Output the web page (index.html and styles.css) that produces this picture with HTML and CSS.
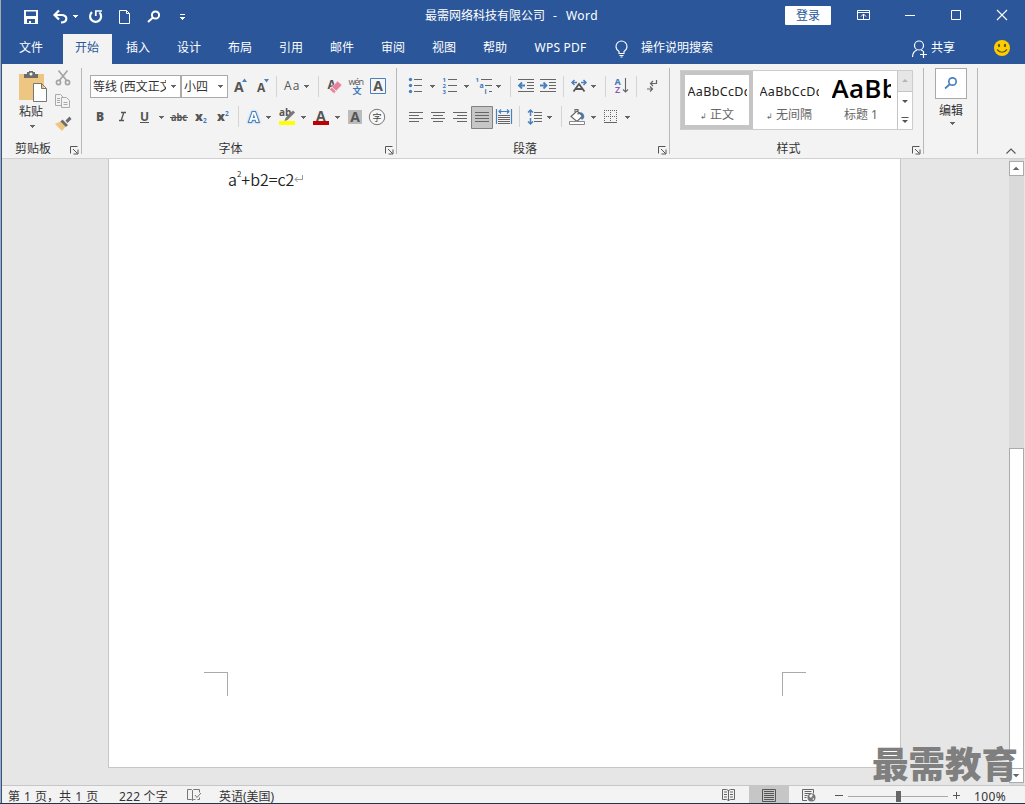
FILE: index.html
```html
<!DOCTYPE html>
<html lang="zh-CN">
<head>
<meta charset="utf-8">
<title>最需网络科技有限公司 - Word</title>
<link rel="stylesheet" href="styles.css">
</head>
<body>
<svg width="0" height="0" class="defs"><defs>
  <path id="dd" d="M0 0h5v1h-1v1h-1v1h-1v-1h-1v-1h-1z"/>
  <path id="launch" d="M.5 7.500V.5H7.500M3 3L7.500 7.500M8 3.500V8H3.500" fill="none" stroke="#555"/>
</defs></svg>
<div class="window">
  <header class="titlebar">
    <div class="quick">
      <svg width="46" height="32" viewBox="2 0 46 32"><path fill="#fff" fill-rule="evenodd" d="M24 10h14v14H24zM26 11.500v4.500h10v-4.500zM27 19v4h2v-2h2v2h4v-4z"/></svg>
      <svg width="36" height="32" viewBox="48 0 36 32"><path d="M55 15H61.500C68 15 68 22.500 61 22.500M59 10.500L54.500 15L59 19.500" fill="none" stroke="#fff" stroke-width="2.200"/><use href="#dd" x="73" y="15" fill="#fff"/></svg>
      <svg width="28" height="32" viewBox="84 0 28 32"><path d="M92 12.200A5.500 5.500 0 1 0 99.500 12.500" fill="none" stroke="#fff" stroke-width="2.200"/><path d="M95.800 16V11H102" fill="none" stroke="#fff" stroke-width="1.700"/></svg>
      <svg width="28" height="32" viewBox="112 0 28 32"><path d="M119.500 10.500H126.500L129.500 13.500V23.500H119.500zM126.500 10.500V13.500H129.500" fill="none" stroke="#fff"/></svg>
      <svg width="30" height="32" viewBox="140 0 30 32"><g fill="none" stroke="#fff" stroke-width="2"><circle cx="155.500" cy="15" r="3.600"/><path d="M153 17.500L148 22"/></g></svg>
      <svg width="30" height="32" viewBox="170 0 30 32"><path d="M180 14h5v1h-5z" fill="#fff"/><use href="#dd" x="180" y="17" fill="#fff"/></svg>
    </div>
    <div class="caption">最需网络科技有限公司<span class="dash">-</span><span class="app">Word</span></div>
    <div class="signin">登录</div>
    <div class="controls">
      <svg width="46" height="32" viewBox="840 0 46 32"><path d="M857.500 10.500h12v9h-12zM857.500 12.500h12M863.500 19V14M861 16.500l2.500-2.500l2.500 2.500" fill="none" stroke="#fff"/></svg>
      <svg width="46" height="32" viewBox="886 0 46 32"><path d="M905 15h10v1h-10z" fill="#fff"/></svg>
      <svg width="46" height="32" viewBox="932 0 46 32"><path d="M951.500 10.500h9v9h-9z" fill="none" stroke="#fff"/></svg>
      <svg width="46" height="32" viewBox="978 0 46 32"><path d="M997 10l10 10M1007 10l-10 10" fill="none" stroke="#fff" stroke-width="1.100"/></svg>
    </div>
  </header>
  <nav class="tabs">
    <span class="tab file">文件</span><span class="tab active">开始</span><span class="tab">插入</span><span class="tab">设计</span><span class="tab">布局</span><span class="tab">引用</span><span class="tab">邮件</span><span class="tab">审阅</span><span class="tab">视图</span><span class="tab">帮助</span><span class="tab wps">WPS PDF</span>
    <svg width="40" height="30" viewBox="600 34 40 30"><path d="M619 53.500V51.500C617.500 50.500 616 48.500 616 46.500A5.500 5.500 0 0 1 627 46.500C627 48.500 625.500 50.500 624 51.500V53.500zM619.500 55.500h4M620.500 57h2" fill="none" stroke="#fff" stroke-width="1.100"/></svg>
    <span class="tell">操作说明搜索</span>
    <div class="share">
      <svg width="21" height="30" viewBox="910 34 21 30"><g fill="none" stroke="#fff" stroke-width="1.200"><circle cx="919" cy="45.500" r="4.500"/><path d="M912.500 57C912.500 53 914.500 51 917 50M921 50L923 51M920 54.500H927M923.500 51V58"/></g></svg>
      <span>共享</span>
    </div>
    <svg width="20" height="30" viewBox="992 33 20 30"><circle cx="1002" cy="47" r="8" fill="#fc0"/><g fill="#5b5320"><ellipse cx="999" cy="44.500" rx="1.100" ry="1.700"/><ellipse cx="1005" cy="44.500" rx="1.100" ry="1.700"/></g><path d="M997 48.500Q1002 54 1007 48.500" fill="none" stroke="#5b5320" stroke-width="1.200"/></svg>
  </nav>
  <section class="ribbon">
    <div class="group clipboard">
      <div class="tools">
        <div class="paste">
          <svg width="50" height="36" viewBox="4 68 50 36"><path d="M19 74h25v26H19z" fill="#edc781"/><path d="M24 78v-4h3v-2h2v-1h4v1h2v2h3v4z" fill="#6d6d6d"/><circle cx="31" cy="74" r="1.500" fill="#f3f3f3"/><path d="M33.500 83.500h8l5 5v13h-13zM41.500 83.500v5h5" fill="#fff" stroke="#777"/></svg>
          <span>粘贴</span>
          <svg width="50" height="12" viewBox="7 119 50 12"><use href="#dd" x="30" y="124" fill="#666"/></svg>
        </div>
        <svg width="28" height="66" viewBox="52 68 28 66">
          <g fill="none" stroke="#a3a3a3" stroke-width="1.600"><path d="M58.500 70.500L67 81M67.500 70.500L59 81"/><circle cx="58.500" cy="82.500" r="2.100"/><circle cx="67.500" cy="82.500" r="2.100"/></g>
          <g fill="#f3f3f3" stroke="#aaa"><path d="M55.500 94.500h5l3 3v8h-8z"/><path d="M61.500 97.500h5l3 3v7h-8z"/><path d="M57 98.500h3M57 100.500h3M57 102.500h3M63.500 102.500h4M63.500 104.500h4" /></g>
          <path d="M55 124l6-3 5 5-4 5z" fill="#edc781"/><path d="M60.500 121.500l2-2 5.500 5.500-2 2zM65.500 120.500l4-4 2 2.500-4 4z" fill="#6d6d6d"/>
        </svg>
      </div>
      <div class="glabel"><span>剪贴板</span><svg width="9" height="9" viewBox="0 0 9 9"><use href="#launch"/></svg></div>
    </div>
    <div class="group font">
      <div class="tools stack">
        <div class="row top">
          <div class="combo name"><span>等线 (西文正文)</span><svg width="9" height="6" viewBox="-2 -1 9 6"><use href="#dd" fill="#666"/></svg></div>
          <div class="combo size"><span>小四</span><svg width="9" height="6" viewBox="-2 -1 9 6"><use href="#dd" fill="#666"/></svg></div>
          <svg width="24" height="28" viewBox="228 72 24 28"><text x="234" y="92" font-size="14" class="ic">A</text><path d="M242 82l2.500-3.500 2.500 3.500z" fill="#4a80bd"/></svg>
          <svg width="30" height="28" viewBox="252 72 30 28"><text x="257" y="92" font-size="12" class="ic">A</text><path d="M264 79h5l-2.500 3.500z" fill="#4a80bd"/><path d="M276 76h1v21h-1z" class="sp"/></svg>
          <svg width="38" height="28" viewBox="282 72 38 28"><text x="284" y="90" font-size="12" class="ic md" textLength="15.500">Aa</text><use href="#dd" x="304" y="85" fill="#666"/><path d="M318 76h1v21h-1z" class="sp"/></svg>
          <svg width="25" height="28" viewBox="320 72 25 28"><text x="327.500" y="89" font-size="12" class="ic">A</text><path d="M329.500 89.500l8-8.500 4.500 4-8 8.500z" fill="#e8829a" stroke="#f3f3f3" stroke-width=".6"/><path d="M331.500 87l4.500 4" stroke="#f3f3f3"/></svg>
          <svg width="23" height="28" viewBox="345 72 23 28"><text x="348.500" y="84.500" font-size="9" textLength="15.500" class="ic md">wén</text><text x="352.500" y="93.500" font-size="9" class="cjb">文</text></svg>
          <svg width="22" height="28" viewBox="368 72 22 28"><path d="M370.500 78.500h15v15h-15z" fill="#f6f6f6" stroke="#4a80bd"/><text x="373.200" y="91" font-size="14" class="ic">A</text></svg>
        </div>
        <div class="row bot">
          <svg width="24" height="26" viewBox="90 104 24 26"><text x="96" y="121" font-size="12" class="ic hv">B</text></svg>
          <svg width="22" height="26" viewBox="114 104 22 26"><path d="M121 112.500h5M119 120.500h5M123.800 112.500l-2.600 8" fill="none" stroke="#555" stroke-width="1.300"/></svg>
          <svg width="32" height="26" viewBox="136 104 32 26"><text x="140" y="121" font-size="12" class="ic">U</text><path d="M140 122h9v1h-9z" fill="#555"/><use href="#dd" x="159" y="116" fill="#666"/></svg>
          <svg width="24" height="26" viewBox="168 104 24 26"><text x="171" y="121" font-size="10.500" textLength="16" lengthAdjust="spacingAndGlyphs" class="ic">abc</text><path d="M170 117h18v1h-18z" fill="#555"/></svg>
          <svg width="20" height="26" viewBox="192 104 20 26"><text x="195" y="121" font-size="12.500" class="ic hv">x</text><text x="203" y="123" font-size="6.500" class="bl">2</text></svg>
          <svg width="32" height="26" viewBox="212 104 32 26"><text x="217" y="121" font-size="12.500" class="ic hv">x</text><text x="225" y="116" font-size="6.500" class="bl">2</text><path d="M238 106h1v21h-1z" class="sp"/></svg>
          <svg width="31" height="26" viewBox="244 104 31 26"><g font-size="14" class="ic"><text x="249" y="122" class="glow">A</text></g><use href="#dd" x="266" y="116" fill="#666"/></svg>
          <svg width="34" height="26" viewBox="275 104 34 26"><text x="279" y="116" font-size="10" class="ic">ab</text><path d="M284.500 121l1-3 7.500-7.500 2 2-7.500 7.500z" fill="#777"/><path d="M279 121h16v4h-16z" fill="#ff0"/><use href="#dd" x="301" y="116" fill="#666"/></svg>
          <svg width="36" height="26" viewBox="309 104 36 26"><text x="316" y="121" font-size="14" class="ic">A</text><path d="M313 121h16v4h-16z" fill="#c00000"/><use href="#dd" x="335" y="116" fill="#666"/></svg>
          <svg width="21" height="26" viewBox="345 104 21 26"><path d="M348 110h14v14h-14z" fill="#bbb"/><text x="350.300" y="122" font-size="14" class="ic">A</text></svg>
          <svg width="23" height="26" viewBox="366 104 23 26"><circle cx="377" cy="117" r="7.700" fill="#f8f8f8" stroke="#777"/><text x="372.500" y="120.500" font-size="9" class="cjk">字</text></svg>
        </div>
      </div>
      <div class="glabel"><span>字体</span><svg width="9" height="9" viewBox="0 0 9 9"><use href="#launch"/></svg></div>
    </div>
    <div class="group para">
      <div class="tools stack">
        <div class="row top">
          <svg width="39" height="28" viewBox="400 72 39 28"><g fill="#4a80bd"><circle cx="410.500" cy="79.500" r="1.700"/><circle cx="410.500" cy="85.500" r="1.700"/><circle cx="410.500" cy="91.500" r="1.700"/></g><path d="M414 79.500h8M414 85.500h8M414 91.500h8" class="ln"/><use href="#dd" x="430" y="85" fill="#666"/></svg>
          <svg width="34" height="28" viewBox="439 72 34 28"><g class="bl" font-size="6"><text x="442.500" y="82">1</text><text x="442.500" y="88">2</text><text x="442.500" y="94">3</text></g><path d="M448 79.500h9M448 85.500h9M448 91.500h9" class="ln"/><use href="#dd" x="464" y="85" fill="#666"/></svg>
          <svg width="39" height="28" viewBox="473 72 39 28"><g class="bl"><text x="475.500" y="82" font-size="6">1</text><text x="479.500" y="88" font-size="7">a</text><text x="484.500" y="94" font-size="7">i</text></g><path d="M481 79.500h11M485 85.500h7M489 91.500h3" class="ln"/><use href="#dd" x="496" y="85" fill="#666"/><path d="M510 76h1v21h-1z" class="sp"/></svg>
          <svg width="26" height="28" viewBox="512 72 26 28"><path d="M518 79.500h16M527 82.500h7M527 85.500h7M527 88.500h7M518 91.500h16" class="ln"/><path d="M525 85.500h-6M522 82.500l-3 3 3 3" fill="none" stroke="#4a80bd" stroke-width="1.800"/></svg>
          <svg width="28" height="28" viewBox="538 72 28 28"><path d="M540 79.500h16M549 82.500h7M549 85.500h7M549 88.500h7M540 91.500h16" class="ln"/><path d="M540 85.500h6M543.500 82.500l3 3-3 3" fill="none" stroke="#4a80bd" stroke-width="1.800"/><path d="M563 76h1v21h-1z" class="sp"/></svg>
          <svg width="41" height="28" viewBox="566 72 41 28"><path d="M573.500 91.500L579 84L584.500 91.500M575.500 89h7" fill="none" stroke="#555" stroke-width="1.800"/><path d="M577 82.500h-5M574.500 80l-2.500 2.500 2.500 2.500M581 82.500h5M583.500 80l2.500 2.500-2.500 2.500" fill="none" stroke="#4a80bd" stroke-width="1.500"/><use href="#dd" x="591" y="85" fill="#666"/><path d="M605 76h1v21h-1z" class="sp"/></svg>
          <svg width="32" height="28" viewBox="607 72 32 28"><text x="614.500" y="84.500" font-size="9" class="bl">A</text><text x="615" y="93" font-size="9" class="pu">Z</text><path d="M625.500 78v14M623 89.500l2.500 2.500 2.500-2.500" fill="none" stroke="#666" stroke-width="1.100"/><path d="M636 76h1v21h-1z" class="sp"/></svg>
          <svg width="30" height="28" viewBox="639 72 30 28"><path d="M656.500 80v3.500h-6M653 81l-2.500 2.500 2.500 2.500M647 89h5M650 86.500l2.500 2.500-2.500 2.500" fill="none" stroke="#666" stroke-width="1.200"/></svg>
        </div>
        <div class="row bot">
          <svg width="26" height="26" viewBox="401 104 26 26"><path d="M409 112.500h14M409 115.500h10M409 118.500h14M409 121.500h10" class="ln"/></svg>
          <svg width="22" height="26" viewBox="427 104 22 26"><path d="M431 112.500h14M433 115.500h10M431 118.500h14M433 121.500h10" class="ln"/></svg>
          <svg width="22" height="26" viewBox="449 104 22 26"><path d="M453 112.500h14M457 115.500h10M453 118.500h14M457 121.500h10" class="ln"/></svg>
          <svg width="23" height="26" viewBox="471 104 23 26"><path d="M471.500 106.500h21v22h-21z" fill="#c6c6c6" stroke="#828282"/><path d="M475 112.500h14M475 115.500h14M475 118.500h14M475 121.500h14" class="ln"/></svg>
          <svg width="29" height="26" viewBox="494 104 29 26"><path d="M498 115.500h12M498 117.500h12M498 119.500h12M498 121.500h12M498 123.500h12" class="ln"/><path d="M496.500 109v15M511.500 109v15M499 111.500h10M501 109.500l-2 2 2 2M507 109.500l2 2-2 2" fill="none" stroke="#4a80bd" stroke-width="1.200"/><path d="M519 106h1v21h-1z" class="sp"/></svg>
          <svg width="40" height="26" viewBox="523 104 40 26"><path d="M530.500 110v6M530.500 118v6M528 112.500l2.500-2.500 2.500 2.500M528 121.500l2.500 2.500 2.500-2.500" fill="none" stroke="#4a80bd" stroke-width="1.500"/><path d="M534 112.500h8M534 115.500h8M534 118.500h8M534 121.500h8" class="ln"/><use href="#dd" x="547" y="116" fill="#666"/><path d="M561 106h1v21h-1z" class="sp"/></svg>
          <svg width="37" height="26" viewBox="563 104 37 26"><path d="M579 112c4 0 6 3 5 6l-2 2-3-4z" fill="#4a80bd"/><path d="M571 116.500l6-5.500 5.500 5-5.500 5.500zM575 113v-3.500h3v5" fill="#fff" stroke="#666" stroke-width="1.100"/><path d="M569.500 121.500h15v3h-15z" fill="#fff" stroke="#888"/><use href="#dd" x="591" y="116" fill="#666"/></svg>
          <svg width="40" height="26" viewBox="600 104 40 26"><path d="M604 110.500h13M604 116.500h13M604.500 110v12M610.500 110v12M616.500 110v12" stroke="#666" stroke-dasharray="1 1"/><path d="M604 122.500h13" class="ln"/><use href="#dd" x="625" y="116" fill="#666"/></svg>
        </div>
      </div>
      <div class="glabel"><span>段落</span><svg width="9" height="9" viewBox="0 0 9 9"><use href="#launch"/></svg></div>
    </div>
    <div class="group styles">
      <div class="tools">
        <div class="gallery">
          <div class="style sel"><b class="sample">AaBbCcDd</b><span><i>↲</i> 正文</span></div>
          <div class="style"><b class="sample">AaBbCcDd</b><span><i>↲</i> 无间隔</span></div>
          <div class="style"><b class="sample big">AaBb</b><span>标题 1</span></div>
          <div class="spin">
            <svg class="off" width="13" height="20" viewBox="0 0 13 20"><path d="M4 11h5v-1h-1v-1h-1v-1h-1v1h-1v1h-1z" fill="#b5b5b5"/></svg>
            <svg width="13" height="19" viewBox="0 0 13 19"><use href="#dd" x="4" y="8" fill="#555"/></svg>
            <svg width="13" height="18" viewBox="0 0 13 18"><path d="M3 6h7v1H3z" fill="#555"/><use href="#dd" x="4" y="9" fill="#555"/></svg>
          </div>
        </div>
      </div>
      <div class="glabel"><span>样式</span><svg width="9" height="9" viewBox="0 0 9 9"><use href="#launch"/></svg></div>
    </div>
    <div class="group edit">
      <div class="find"><svg width="31" height="29" viewBox="935 69 31 29"><g fill="none" stroke="#4a80bd" stroke-width="1.700"><circle cx="951.500" cy="81.500" r="3.700"/><path d="M949 84l-5 4.500"/></g></svg></div>
      <span>编辑</span>
      <svg width="31" height="8" viewBox="935 119 31 8"><use href="#dd" x="950" y="123" fill="#666"/></svg>
    </div>
    <svg class="collapse" width="12" height="8" viewBox="0 0 12 8"><path d="M1.500 6.500L6 2l4.500 4.500" fill="none" stroke="#555" stroke-width="1.100"/></svg>
  </section>
  <main class="workspace">
    <article class="page">
      <p class="formula">a<sup>2</sup>+b2=c2<svg width="10" height="10" viewBox="0 0 10 10"><path d="M8.500 1v4.500H1M3.500 3L1 5.500 3.500 8" fill="none" stroke="#999"/></svg></p>
      <div class="marks"><i class="mark left"></i><i class="mark right"></i></div>
    </article>
    <div class="scroll">
      <svg class="sbtn" width="14" height="13" viewBox="0 0 14 13"><path d="M3 8h7L6.500 4.500z" fill="#666"/></svg>
      <div class="thumb"></div>
      <svg class="sbtn" width="14" height="13" viewBox="0 0 14 13"><path d="M3 5h7L6.500 8.500z" fill="#666"/></svg>
    </div>
  </main>
  <footer class="status">
    <span class="pages">第 1 页，共 1 页</span>
    <span class="words">222 个字</span>
    <svg class="proof" width="16" height="17" viewBox="186 786 16 17"><path d="M192.500 790.500v10M187.500 789.500h4l1 1 1-1h6v3M187.500 789.500v10h4l1 1 1-1h2M195 795l2 2.500 4-4.500M197.500 799.500h2v-2" fill="none" stroke="#777"/></svg>
    <span class="lang">英语(美国)</span>
    <div class="views">
      <svg width="40" height="17" viewBox="709 786 40 17"><path d="M722.500 789.500h4l2 1 2-1h4v10h-4l-2 1-2-1h-4zM728.500 790v11M724 792h3M724 794.500h3M724 797h3M730 792h3M730 794.500h3M730 797h3" fill="none" stroke="#666"/></svg>
      <svg class="on" width="40" height="17" viewBox="749 786 40 17"><path d="M762.500 789.500h13v12h-13zM764 791.500h10M764 793.500h10M764 795.500h10M764 797.500h10M764 799.500h10" fill="none" stroke="#555"/></svg>
      <svg width="40" height="17" viewBox="789 786 40 17"><path d="M807 800.500h-4.500v-11h11v4M804.500 791.500h7M804.500 793.500h7M804.500 795.500h3M804.500 797.500h2" fill="none" stroke="#666"/><circle cx="811.500" cy="797.500" r="4" fill="#777"/><path d="M809 796l2-2 2 1-2 3zM812 799l2-1v2z" fill="#f3f3f3"/></svg>
    </div>
    <svg width="140" height="17" viewBox="829 786 140 17"><path d="M835 795h8v1h-8zM953 795h7v1h-7zM956 792h1v7h-1z" fill="#555"/><path d="M848 796h100v1H848z" fill="#aaa"/><path d="M896 791h5v11h-5z" fill="#666"/></svg>
    <span class="zoom">100%</span>
  </footer>
  <div class="watermark">最需教育</div>
</div>
</body>
</html>
```
FILE: styles.css
```css
* { box-sizing: border-box; }
body { margin: 0; overflow: hidden; font: 12px/16px "Noto Sans", "Noto Sans CJK SC", sans-serif; color: #333; }
svg { display: block; flex: none; }
.defs { position: absolute; }
.window { position: relative; width: 1025px; height: 804px; display: flex; flex-direction: column; background: #e6e6e6; border-bottom: 1px solid #263545; }
.window::before { content: ""; position: absolute; left: 0; top: 0; width: 2px; height: 803px; background: linear-gradient(90deg, #a9a9a9 50%, #2b579a 50%); z-index: 2; }
.titlebar { height: 34px; padding-left: 2px; background: #2b579a; display: flex; color: #fff; align-items: flex-start; }
.quick, .controls { display: flex; }
.caption { width: 174px; margin-left: 225px; padding-top: 8px; white-space: nowrap; }
.dash { margin: 0 9px 0 8px; }
.app { letter-spacing: .5px; }
.signin { width: 46px; height: 19px; margin: 6px 9px 0 186px; background: #fff; color: #2b579a; text-align: center; line-height: 19px; border-radius: 1px; }
.tabs { height: 30px; background: #2b579a; color: #fff; display: flex; align-items: stretch; line-height: 28px; }
.tab { width: 51px; text-align: center; flex: none; padding-left: 1px; }
.tab.file { width: 63px; padding: 0 1px 0 0; }
.tab.active { width: 49px; background: #f3f3f3; color: #2b579a; padding: 0 1px 0 0; }
.tab.wps { width: 80px; letter-spacing: .2px; }
.tell { width: 270px; padding-left: 1px; }
.share { display: flex; width: 82px; }
.ribbon { height: 95px; padding: 4px 0 0 2px; display: flex; background: #f3f3f3; border-bottom: 1px solid #d0d0d0; }
.group { height: 86px; border-right: 1px solid #b8b8b8; display: flex; flex-direction: column; }
.clipboard { width: 80px; }
.font { width: 315px; }
.para { width: 273px; }
.styles { width: 254px; }
.edit { width: 54px; align-items: center; }
.tools { height: 71px; display: flex; flex: none; }
.stack { flex-direction: column; gap: 4px; padding-top: 4px; }
.row { display: flex; }
.font .row { padding-left: 8px; }
.para .row.top { padding-left: 3px; }
.para .row.bot { padding-left: 4px; }
.glabel { height: 16px; display: flex; justify-content: center; position: relative; line-height: 20px; }
.glabel svg { position: absolute; right: 2px; top: 7px; }
.clipboard .glabel { padding-right: 17px; }
.font .glabel { padding-right: 17px; }
.para .glabel { padding-right: 16px; }
.styles .glabel { padding-right: 16px; }
.paste { width: 50px; margin-left: 2px; display: flex; flex-direction: column; }
.paste span { margin-left: 15px; }
.paste svg:last-child { margin-left: 3px; }
.clipboard .tools > svg { margin-left: -2px; }
.combo { height: 23px; margin-top: 3px; background: #fff; border: 1px solid #aaa; display: flex; align-items: center; padding-left: 2px; line-height: 20px; white-space: nowrap; color: #333; }
.combo span { overflow: hidden; }
.combo svg { margin-left: auto; }
.name { width: 91px; padding-right: 2px; }
.name span { width: 73px; }
.size { width: 47px; padding-right: 2px; }
.ic { fill: #555; font-family: "Open Sans", sans-serif; font-weight: 700; }
.md { font-weight: 500; }
.hv { font-weight: 800; }
.glow { fill: #fff; stroke: #4380bf; stroke-width: 2px; paint-order: stroke; filter: drop-shadow(0 0 1px #8ab8e6); }
.bl { fill: #3f79bb; font-family: "Noto Sans", sans-serif; font-weight: 700; }
.pu { fill: #8c55b5; font-weight: 600; }
.cjb { fill: #3f79bb; font-family: "Noto Sans CJK SC", sans-serif; font-weight: 700; }
.cjk { fill: #444; font-family: "Noto Sans CJK SC", sans-serif; }
.sp { fill: #d4d4d4; }
.ln { stroke: #666; fill: none; }
.gallery { width: 233px; height: 60px; margin: 2px 0 0 10px; border: 1px solid #cdcdcd; background: #fff; display: flex; }
.style { width: 72px; height: 58px; padding-top: 12px; display: flex; flex-direction: column; align-items: center; color: #666; line-height: 16px; flex: none; }
.style.sel { box-shadow: inset 0 0 0 4px #c5c5c5; }
.style i { font-style: normal; font-size: 8px; }
.sample { width: 59px; height: 18px; overflow: hidden; font: 400 12.5px/18px "Noto Sans", sans-serif; letter-spacing: .35px; color: #222; margin-bottom: 6px; }
.sample.big { font: 600 26px/26px "Open Sans", sans-serif; letter-spacing: .3px; color: #000; height: 25px; margin: -8px 0 7px; }
.spin { width: 15px; border-left: 1px solid #c5c5c5; display: flex; flex-direction: column; justify-content: space-between; background: #c5c5c5; }
.spin svg { background: #fff; width: 14px; }
.spin svg.off { background: #e6e6e6; }
.find { width: 32px; height: 31px; border: 1px solid #aaa; background: #fff; overflow: hidden; margin-bottom: 4px; margin-left: 1px; }
.edit span { margin-left: 1px; }
.edit svg { margin-top: -1px; }
.find svg { margin-top: 0; }
.collapse { margin: 79px 0 0 27px; }
.workspace { height: 626px; display: flex; justify-content: space-between; }
.page { width: 793px; height: 609px; margin-left: 108px; background: #fff; border: 1px solid #c6c6c6; border-top: 0; display: flex; flex-direction: column; justify-content: space-between; }
.formula { margin: 8px 0 0 119px; font: 16px/24px "Noto Sans CJK SC", sans-serif; font-weight: 350; color: #222; display: flex; }
.formula sup { font-size: 8px; line-height: 13px; }
.formula svg { margin-top: 7px; }
.marks { display: flex; justify-content: space-between; padding: 0 94px 71px 95px; }
.mark { width: 24px; height: 24px; border: 0 solid #aaa; border-top-width: 1px; }
.left { border-right-width: 1px; }
.right { border-left-width: 1px; }
.scroll { width: 16px; padding: 2px 1px 2px 0; display: flex; flex-direction: column; background: linear-gradient(90deg, #dadada 15px, #e6e6e6 15px); }
.sbtn { width: 15px; height: 15px; background: #fff; border: 1px solid #ababab; }
.thumb { height: 320px; margin-top: auto; background: #fff; border: 1px solid #ababab; border-bottom: 0; }
.status { height: 18px; background: #f3f3f3; border-top: 1px solid #c6c6c6; display: flex; padding-left: 8px; line-height: 21px; overflow: hidden; white-space: nowrap; }
.pages { width: 111px; word-spacing: 1px; }
.words { width: 67px; letter-spacing: .2px; }
.lang { margin-left: 17px; }
.views { display: flex; margin-left: auto; }
.on { background: #c6c6c6; }
.zoom { width: 56px; padding-left: 5px; letter-spacing: .4px; }
.watermark { position: absolute; left: 872px; top: 736px; font: 900 36.500px/54px "Noto Sans CJK SC", sans-serif; color: #7f7f7f; white-space: nowrap; }
```
